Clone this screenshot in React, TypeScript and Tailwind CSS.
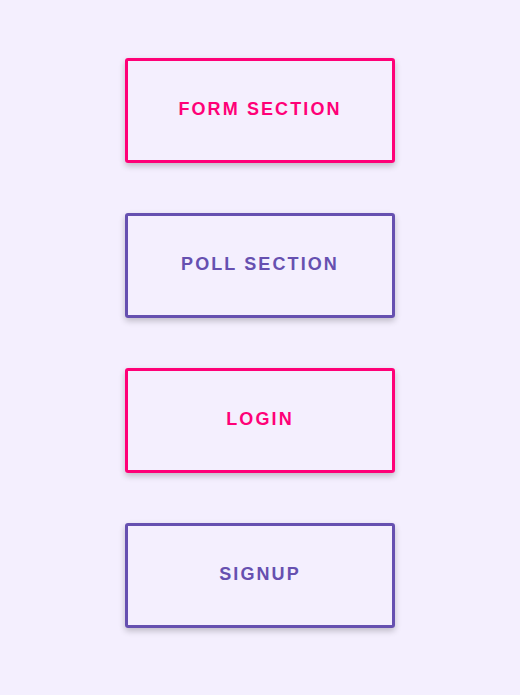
const items = [
  { label: "Form Section", pink: true },
  { label: "Poll Section", pink: false },
  { label: "Login", pink: true },
  { label: "Signup", pink: false },
];

export default function App() {
  return (
    <div className="min-h-[695px] bg-[#f4effe] flex flex-col items-center pt-[58px] gap-[50px] font-['Liberation_Sans',Arial,sans-serif]">
      {items.map((it) => (
        <button
          key={it.label}
          className={
            it.pink
              ? "w-[270px] h-[105px] rounded-[3px] border-[3px] border-[#ff0077] text-[#ff0077] bg-transparent shadow-[0_3px_6px_rgba(0,0,0,0.22)] uppercase font-bold text-[18px] tracking-[2.1px] pb-[2px]"
              : "w-[270px] h-[105px] rounded-[3px] border-[3px] border-[#6650b0] text-[#6650b0] bg-transparent shadow-[0_3px_6px_rgba(0,0,0,0.22)] uppercase font-bold text-[18px] tracking-[2.1px] pb-[2px]"
          }
        >
          {it.label}
        </button>
      ))}
    </div>
  );
}
